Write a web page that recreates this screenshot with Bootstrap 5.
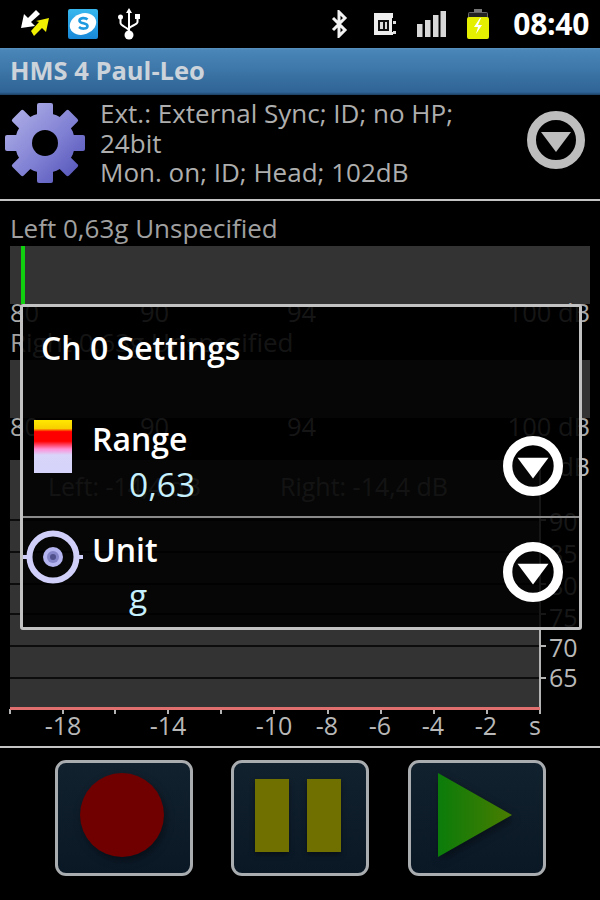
<!DOCTYPE html>
<html lang="en">
<head>
<meta charset="utf-8">
<title>HMS 4 Paul-Leo</title>
<link href="https://cdn.jsdelivr.net/npm/bootstrap@5.3.0/dist/css/bootstrap.min.css" rel="stylesheet">
<style>
html,body{background:#000;margin:0;}
body{width:600px;height:900px;overflow:hidden;font-family:"Open Sans","Noto Sans",sans-serif;color:#b4b4b4;}
svg{display:block;flex:none;}
.appframe{position:relative;width:600px;height:900px;background:#000;}
.appframe>*{flex:none;}
.statusrow{height:48px;}
.st-sync{margin-left:20px;}
.st-skype{margin-left:18px;}
.st-usb{margin-left:20px;}
.st-sd{margin-left:26px;}
.st-sig{margin-left:21px;}
.st-bat{margin-left:21px;}
.clock{margin-left:24px;margin-right:11px;font-size:30px;font-weight:700;color:#fff;line-height:48px;letter-spacing:-.3px;}
.titlerow{height:47px;background:linear-gradient(#5a92c0 0,#4a86b8 4%,#2f6496 94%,#1c3f63 100%);padding-left:10px;font-size:25.500px;font-weight:700;color:#ccd3da;line-height:44px;}
.headrow{height:106px;border-bottom:2px solid #c4c4c4;}
.headtext{width:410px;margin-left:15px;font-size:26px;line-height:29.500px;color:#aeaeae;padding-top:4px;}
.gearbox{margin-left:5px;}
.headarrow{margin-left:17px;}
.meterblock{padding:0 10px;}
.meterhead{font-size:26px;line-height:24px;color:#a0a0a0;white-space:nowrap;}
.meterbar{height:58px;background:#333;margin-top:6px;}
.meterfill{width:4px;height:100%;margin-left:11px;background:#10d010;}
.meterscale{display:grid;grid-template-columns:130px 147px 222px 81px;font-size:25.500px;line-height:24px;color:#a8a8a8;margin-top:-4px;white-space:nowrap;}
.meterscale span:last-child{justify-self:end;}
.block-left{margin-top:15px;}
.block-right{margin-top:6px;}
.chartsvg text{font-family:"Open Sans","Noto Sans",sans-serif;font-size:25px;fill:#b8b8b8;}
.chartsvg .readout{fill:#9a9a9a;}
.footrow{border-top:2px solid #c4c4c4;height:154px;padding:12px 0 0 55px;gap:38px;}
.ctlbtn{width:138px;height:116px;border:3px solid #a9adb0;border-radius:11px;background:linear-gradient(#12212e,#0a1826);padding:0 4px 6px 0;}
.ctlgap{gap:18px;}
.ctl-play{margin-left:1px;}
.ctlglyph{filter:drop-shadow(2px 4px 4px rgba(0,0,0,.4));}
.pbar{width:34px;height:73px;background:#707000;box-shadow:0 3px 5px rgba(0,0,0,.4);}
.dlg{position:absolute;left:20px;top:304px;width:562px;height:326px;border:3px solid #c2c2c2;border-radius:3px;background:rgba(0,0,0,.88);color:#fff;}
.dlgtitle{height:110px;padding:21px 0 0 18px;font-size:32px;line-height:40px;font-weight:600;}
.dlgrow{height:100px;}
.row-range{padding-top:3px;}
.row-unit{border-top:2px solid #8a8a8a;height:111px;padding-top:13px;}
.rowicon{width:68px;margin-left:1px;}
.rangeswatch{width:38px;height:53px;margin-left:10px;background:linear-gradient(#ffe800 0,#f8d000 16%,#ff0000 22%,#ff0000 40%,#ff90d8 55%,#d8d4fa 66%,#d6d4fa 100%);}
.targeticon{margin-left:-1px;margin-top:-2px;}
.rowlabel{font-size:32px;line-height:38px;font-weight:600;}
.rowvalue{font-size:33.500px;line-height:38px;color:#c6f0fc;padding-left:37px;margin-top:7px;}
.rowtexts{width:411px;}
.arrow-range{margin-top:16px;}
.arrow-unit{margin-top:11px;}
</style>
</head>
<body>
<div class="appframe d-flex flex-column">

  <div class="statusrow d-flex align-items-center">
    <svg class="st-sync" width="30" height="30" viewBox="0 0 30 30" aria-hidden="true">
      <path d="M16 1l4 4-9 8 4 4-14 2 3-14 4 4z" fill="#fff"/>
      <path d="M11 22l8-9-3-1 13-3-3 14-4-4-8 8z" fill="#f0f000"/>
    </svg>
    <svg class="st-skype" width="30" height="30" viewBox="0 0 30 30" aria-hidden="true">
      <defs><linearGradient id="skyb" x1="0" y1="0" x2="0" y2="1"><stop offset="0" stop-color="#38b8ee"/><stop offset="1" stop-color="#1888d8"/></linearGradient></defs>
      <rect width="30" height="30" rx="2" fill="url(#skyb)"/>
      <ellipse cx="15" cy="15" rx="13.500" ry="10.500" fill="#fff" transform="rotate(-20 15 15)"/>
      <path d="M19.500 10.500c-2-2-8-2-8 1.200 0 3.400 8 1.800 8 5.300 0 3.300-6 3.200-8.500 1" fill="none" stroke="#1e9ae0" stroke-width="2.600"/>
    </svg>
    <svg class="st-usb" width="22" height="32" viewBox="0 0 22 32" aria-hidden="true">
      <g fill="#fff">
        <path d="M11 0l3 5h-2v19h-2V5H8z"/>
        <circle cx="11" cy="27" r="4.500"/>
        <circle cx="2.500" cy="9" r="2.500"/>
        <rect x="17" y="6" width="5" height="5"/>
      </g>
      <path d="M2.500 10v5c0 3 8.500 5 8.500 8M19.500 10v4c0 3-8.500 4-8.500 7" fill="none" stroke="#fff" stroke-width="2"/>
    </svg>
    <svg class="ms-auto" width="17" height="28" viewBox="0 0 17 28" aria-hidden="true">
      <path d="M2 8l12 12-6 6V2l6 6L2 20" fill="none" stroke="#f2f2f2" stroke-width="3"/>
    </svg>
    <svg class="st-sd" width="22" height="24" viewBox="0 0 22 24" aria-hidden="true">
      <path d="M0 0h19v22H0z" fill="#eee" transform="translate(0 1)"/>
      <rect x="4" y="8" width="11" height="11" fill="#111"/>
      <rect x="6" y="10" width="3" height="7" fill="#ddd"/>
      <rect x="11" y="10" width="2" height="7" fill="#ddd"/>
      <rect x="18" y="6" width="4" height="14" fill="#000"/>
      <rect x="19" y="9" width="3" height="3" fill="#ddd"/>
      <rect x="19" y="19" width="3" height="3" fill="#ddd"/>
    </svg>
    <svg class="st-sig" width="29" height="26" viewBox="0 0 29 26" aria-hidden="true">
      <g fill="#d8d8d8">
        <rect x="0" y="13" width="5.500" height="13"/>
        <rect x="8" y="9" width="5.500" height="17"/>
        <rect x="16" y="4" width="5.500" height="22"/>
        <rect x="23.500" y="0" width="5.500" height="26"/>
      </g>
    </svg>
    <svg class="st-bat" width="22" height="30" viewBox="0 0 22 30" aria-hidden="true">
      <rect x="7" y="0" width="8" height="4" fill="#777"/>
      <rect x="1" y="3" width="20" height="27" rx="2" fill="#666"/>
      <rect x="0" y="8" width="22" height="22" rx="2" fill="#e4f000"/>
      <rect x="2" y="4" width="18" height="4" fill="#222"/>
      <path d="M13 9l-6 9h4l-2 7 6-9h-4l3-7z" fill="#fff"/>
    </svg>
    <div class="clock">08:40</div>
  </div>

  <div class="titlerow">HMS 4 Paul-Leo</div>

  <div class="headrow d-flex align-items-start">
    <svg class="gearbox mt-2" width="80" height="80" viewBox="0 0 80 80" aria-hidden="true">
      <defs>
        <linearGradient id="gearfill" x1="0" y1="0" x2="1" y2="1"><stop offset="0" stop-color="#b6b6ea"/><stop offset=".55" stop-color="#8080d4"/><stop offset="1" stop-color="#4c4cb4"/></linearGradient>
        <mask id="gearmask">
          <circle cx="40" cy="40" r="30" fill="#fff"/>
          <g fill="#fff">
            <rect x="32" y="0" width="16" height="20" rx="2"/>
            <rect x="32" y="0" width="16" height="20" rx="2" transform="rotate(45 40 40)"/>
            <rect x="32" y="0" width="16" height="20" rx="2" transform="rotate(90 40 40)"/>
            <rect x="32" y="0" width="16" height="20" rx="2" transform="rotate(135 40 40)"/>
            <rect x="32" y="0" width="16" height="20" rx="2" transform="rotate(180 40 40)"/>
            <rect x="32" y="0" width="16" height="20" rx="2" transform="rotate(225 40 40)"/>
            <rect x="32" y="0" width="16" height="20" rx="2" transform="rotate(270 40 40)"/>
            <rect x="32" y="0" width="16" height="20" rx="2" transform="rotate(315 40 40)"/>
          </g>
          <circle cx="40" cy="40" r="13" fill="#000"/>
        </mask>
      </defs>
      <rect width="80" height="80" fill="url(#gearfill)" mask="url(#gearmask)"/>
    </svg>
    <div class="headtext">Ext.: External Sync; ID; no HP; 24bit<br>Mon. on; ID; Head; 102dB</div>
    <svg class="headarrow mt-3" width="58" height="58" viewBox="0 0 58 58" aria-hidden="true">
      <circle cx="29" cy="29" r="24.500" fill="none" stroke="#bdbdbd" stroke-width="9"/>
      <path d="M14 21h30L29 41z" fill="#bdbdbd"/>
    </svg>
  </div>

  <div class="meterblock block-left">
    <div class="meterhead">Left 0,63g Unspecified</div>
    <div class="meterbar"><div class="meterfill"></div></div>
    <div class="meterscale"><span>80</span><span>90</span><span>94</span><span>100 dB</span></div>
  </div>
  <div class="meterblock block-right">
    <div class="meterhead">Right 0,63g Unspecified</div>
    <div class="meterbar"></div>
    <div class="meterscale"><span>80</span><span>90</span><span>94</span><span>100 dB</span></div>
  </div>

  <svg class="chartsvg" width="600" height="308" viewBox="0 17 600 308">
    <rect x="10" y="39" width="530" height="249" fill="#333"/>
    <g stroke="#0c0c0c" stroke-width="2">
      <line x1="10" x2="540" y1="99" y2="99"/>
      <line x1="10" x2="540" y1="131" y2="131"/>
      <line x1="10" x2="540" y1="163" y2="163"/>
      <line x1="10" x2="540" y1="193" y2="193"/>
      <line x1="10" x2="540" y1="225" y2="225"/>
      <line x1="10" x2="540" y1="257" y2="257"/>
    </g>
    <g stroke="#b4b4b4" stroke-width="2">
      <line x1="540" x2="540" y1="39" y2="293"/>
      <line x1="540" x2="546" y1="99" y2="99"/>
      <line x1="540" x2="546" y1="131" y2="131"/>
      <line x1="540" x2="546" y1="163" y2="163"/>
      <line x1="540" x2="546" y1="193" y2="193"/>
      <line x1="540" x2="546" y1="225" y2="225"/>
      <line x1="540" x2="546" y1="257" y2="257"/>
      <line x1="10" x2="10" y1="288" y2="293"/>
      <line x1="63" x2="63" y1="288" y2="293"/>
      <line x1="115" x2="115" y1="288" y2="293"/>
      <line x1="168" x2="168" y1="288" y2="293"/>
      <line x1="221" x2="221" y1="288" y2="293"/>
      <line x1="274" x2="274" y1="288" y2="293"/>
      <line x1="328" x2="328" y1="288" y2="293"/>
      <line x1="381" x2="381" y1="288" y2="293"/>
      <line x1="434" x2="434" y1="288" y2="293"/>
      <line x1="487" x2="487" y1="288" y2="293"/>
    </g>
    <rect x="10" y="286" width="530" height="3" fill="#e07070"/>
    <text class="readout" x="48" y="75">Left: -14,4 dB</text>
    <text class="readout" x="280" y="75">Right: -14,4 dB</text>
    <text x="590" y="55" text-anchor="end">dB</text>
    <text x="549" y="110">90</text>
    <text x="549" y="142">85</text>
    <text x="549" y="174">80</text>
    <text x="549" y="206">75</text>
    <text x="549" y="236">70</text>
    <text x="549" y="266">65</text>
    <text x="63" y="314" text-anchor="middle">-18</text>
    <text x="168" y="314" text-anchor="middle">-14</text>
    <text x="274" y="314" text-anchor="middle">-10</text>
    <text x="327" y="314" text-anchor="middle">-8</text>
    <text x="380" y="314" text-anchor="middle">-6</text>
    <text x="433" y="314" text-anchor="middle">-4</text>
    <text x="486" y="314" text-anchor="middle">-2</text>
    <text x="535" y="314" text-anchor="middle">s</text>
  </svg>

  <div class="footrow d-flex align-items-start">
    <button type="button" class="ctlbtn d-flex align-items-center justify-content-center" aria-label="Record">
      <svg class="ctlglyph" width="84" height="84" viewBox="0 0 84 84" aria-hidden="true"><circle cx="42" cy="42" r="42" fill="#700000"/></svg>
    </button>
    <button type="button" class="ctlbtn ctlgap d-flex align-items-center justify-content-center" aria-label="Pause">
      <span class="pbar"></span><span class="pbar"></span>
    </button>
    <button type="button" class="ctlbtn ctl-play d-flex align-items-center justify-content-center" aria-label="Play">
      <svg class="ctlglyph" width="74" height="84" viewBox="0 0 74 84" aria-hidden="true">
        <defs><linearGradient id="playg" x1="0" y1="0" x2="1" y2="0"><stop offset="0" stop-color="#0a7c0a"/><stop offset="1" stop-color="#4a7c00"/></linearGradient></defs>
        <path d="M0 0L74 42 0 84z" fill="url(#playg)"/>
      </svg>
    </button>
  </div>

  <div class="dlg d-flex flex-column">
    <div class="dlgtitle">Ch 0 Settings</div>
    <div class="dlgrow row-range d-flex align-items-start">
      <div class="rowicon"><div class="rangeswatch"></div></div>
      <div class="rowtexts">
        <div class="rowlabel">Range</div>
        <div class="rowvalue">0,63</div>
      </div>
      <svg class="arrow-range" width="60" height="60" viewBox="0 0 58 58" aria-hidden="true">
        <circle cx="29" cy="29" r="24.500" fill="none" stroke="#fff" stroke-width="9"/>
        <path d="M14 21h30L29 41z" fill="#fff"/>
      </svg>
    </div>
    <div class="dlgrow row-unit d-flex align-items-start">
      <div class="rowicon">
        <svg class="targeticon" width="60" height="56" viewBox="0 0 60 56" aria-hidden="true">
          <circle cx="30" cy="28" r="23.500" fill="none" stroke="#cfcffa" stroke-width="6"/>
          <circle cx="30" cy="28" r="10" fill="#b4b4f0"/>
          <circle cx="30" cy="28" r="6" fill="#8484c8"/>
          <circle cx="30" cy="28" r="3" fill="#50508c"/>
          <rect x="0" y="26" width="5" height="4" fill="#cfcffa"/>
          <rect x="54" y="26" width="6" height="4" fill="#cfcffa"/>
        </svg>
      </div>
      <div class="rowtexts">
        <div class="rowlabel">Unit</div>
        <div class="rowvalue">g</div>
      </div>
      <svg class="arrow-unit" width="60" height="60" viewBox="0 0 58 58" aria-hidden="true">
        <circle cx="29" cy="29" r="24.500" fill="none" stroke="#fff" stroke-width="9"/>
        <path d="M14 21h30L29 41z" fill="#fff"/>
      </svg>
    </div>
  </div>
</div>
<script src="https://cdn.jsdelivr.net/npm/bootstrap@5.3.0/dist/js/bootstrap.bundle.min.js"></script>
</body>
</html>
